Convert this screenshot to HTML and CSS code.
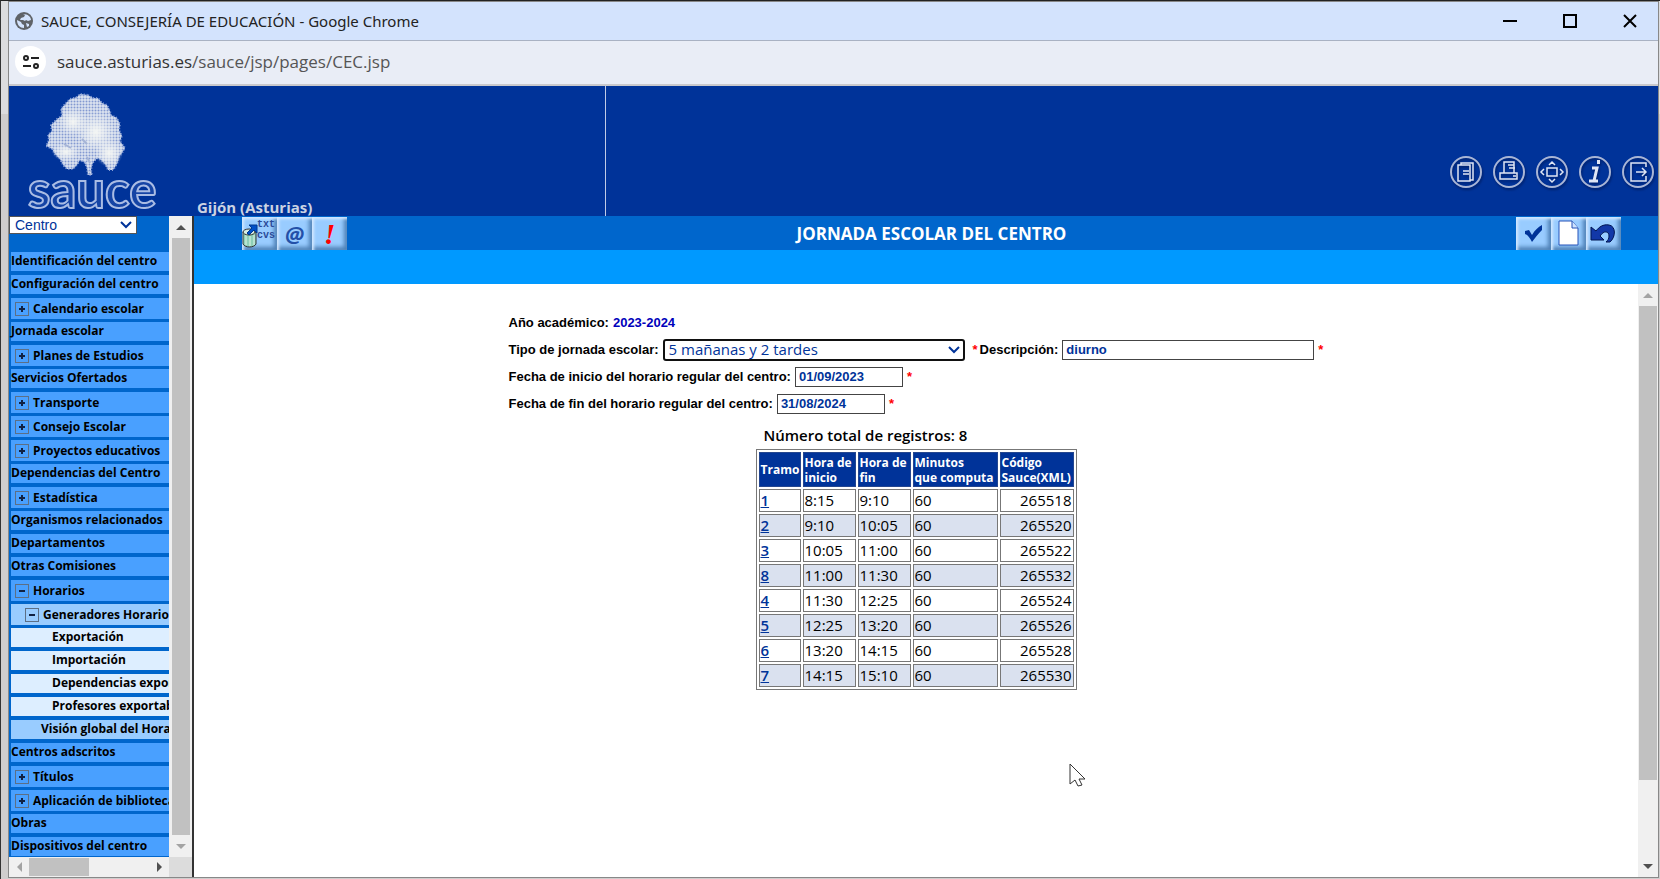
FILE: index.html
```html
<!DOCTYPE html>
<html lang="es">
<head>
<meta charset="utf-8">
<title>SAUCE, CONSEJERÍA DE EDUCACIÓN</title>
<link rel="stylesheet" href="styles.css">
</head>
<body>
<div class="desktop">
<div class="window">

<div class="titlebar">
  <svg class="globe" width="18" height="18" viewBox="0 0 18 18"><circle cx="9" cy="9" r="9" fill="#5f6368"/><path d="M2 8l4 2 1 2 2 1v3c-4 0-7-3-7-8zM8 2l2 1-1 2-3 1-1 2 3 0 2 1 1-1 2 1 3-1c0-3-3-6-8-6zM11 11l3 1 0 2-2 1z" fill="#d3e3fd"/></svg>
  <span class="window-title">SAUCE, CONSEJERÍA DE EDUCACIÓN - Google Chrome</span>
  <div class="window-buttons">
    <button aria-label="Minimizar"><svg width="14" height="14" viewBox="0 0 14 14"><path d="M0 7h14" stroke="#000" stroke-width="2"/></svg></button>
    <button aria-label="Maximizar"><svg width="14" height="14" viewBox="0 0 14 14"><path d="M1 1h12v12H1z" fill="none" stroke="#000" stroke-width="2"/></svg></button>
    <button aria-label="Cerrar"><svg width="14" height="14" viewBox="0 0 14 14"><path d="M1 1l12 12M13 1L1 13" stroke="#000" stroke-width="2"/></svg></button>
  </div>
</div>

<div class="urlbar">
  <button class="site-info" aria-label="Información del sitio">
    <svg width="16" height="16" viewBox="0 0 16 16" fill="none" stroke="#222" stroke-width="2"><circle cx="3" cy="4" r="2"/><path d="M8 4h8M0 12h8"/><circle cx="13" cy="12" r="2"/></svg>
  </button>
  <span class="url">sauce.asturias.es<span class="path">/sauce/jsp/pages/CEC.jsp</span></span>
</div>

<header class="header">
  <div class="brand">
    <svg class="logo" width="150" height="130" viewBox="0 0 150 130">
      <defs>
        <pattern id="dots" width="3" height="3" patternUnits="userSpaceOnUse"><rect width="3" height="3" fill="#b9c6e4"/><rect width="1" height="1" fill="#8399d0"/><rect x="1" y="1" width="2" height="2" fill="#d6deed"/></pattern>
        <radialGradient id="shine"><stop offset="0" stop-color="#f4f6f4" stop-opacity="1"/><stop offset="1" stop-color="#f4f6f4" stop-opacity="0"/></radialGradient>
      </defs>
      <path d="M80 9l5 3 5 0 4 5 5 2 3 6 1 4 6 3 3 6-1 6 3 6-2 5 5 7-3 5-3 4-2 7-4 6-5 0-3-6-4-4-3-2-4 3-2 4-1 5 1 5h-4l-1-7-2-5-5-3-3 5-4 4-6 0-4-4-3-6-5-5-3-5-6-3 3-6-1-5 4-4-1-6 6-6 5-3-1-7 4-5 5-5 7-2 3-3z" fill="url(#dots)" stroke="#8ea4d8" stroke-width="2" stroke-dasharray="1 2"/>
      <ellipse cx="88" cy="46" rx="20" ry="20" fill="url(#shine)"/>
      <ellipse cx="65" cy="36" rx="15" ry="14" fill="url(#shine)"/>
      <ellipse cx="101" cy="67" rx="14" ry="14" fill="url(#shine)"/>
      <ellipse cx="58" cy="66" rx="14" ry="9" fill="url(#shine)"/>
      <path d="M79 71l3 6M56 58l7 4M74 53l5 5" stroke="#a5b4d6" stroke-width="2"/>
      <text class="logo-text" x="20" y="122">sauce</text>
    </svg>
    <span class="place">Gijón (Asturias)</span>
  </div>
  <nav class="tools">
    <a href="#" aria-label="Copiar"><svg width="32" height="32" viewBox="0 0 32 32"><circle cx="16" cy="16" r="15"/><path d="M11 9V7h12v17h-3M8 9h12v16H8zM13 15h6M13 18h6"/></svg></a>
    <a href="#" aria-label="Imprimir"><svg width="32" height="32" viewBox="0 0 32 32"><circle cx="16" cy="16" r="15"/><path d="M11 17V6h10v11M15 9h6M16 12h6M7 17h17v6H7zM20 20h3"/></svg></a>
    <a href="#" aria-label="Mover"><svg width="32" height="32" viewBox="0 0 32 32"><circle cx="16" cy="16" r="15"/><path d="M11 12h10v8H11zM13 9l3-3 3 3M13 23l3 3 3-3M8 13l-3 3 3 3M24 13l3 3-3 3"/></svg></a>
    <a href="#" aria-label="Información"><svg width="32" height="32" viewBox="0 0 32 32"><circle cx="16" cy="16" r="15"/><path d="M13 12h5l-3 13M10 25h9" stroke-width="3"/><path d="M18 6h3" stroke-width="4"/></svg></a>
    <a href="#" aria-label="Salir"><svg width="32" height="32" viewBox="0 0 32 32"><circle cx="16" cy="16" r="15"/><path d="M24 11V7H9v18h15v-5M14 16h10M20 12l4 4-4 4"/></svg></a>
  </nav>
</header>

<div class="page">
  <aside class="sidebar">
    <div class="sidebar-body">
      <div class="menu">
        <div class="picker module">
          <select aria-label="Módulo"><option>Centro</option></select>
          <svg width="12" height="8" viewBox="0 0 12 8"><path d="M1 1l5 5 5-5"/></svg>
        </div>
        <ul>
          <li><a href="#">Identificación del centro</a></li>
          <li><a href="#">Configuración del centro</a></li>
          <li class="node plus"><a href="#">Calendario escolar</a></li>
          <li><a href="#">Jornada escolar</a></li>
          <li class="node plus"><a href="#">Planes de Estudios</a></li>
          <li><a href="#">Servicios Ofertados</a></li>
          <li class="node plus"><a href="#">Transporte</a></li>
          <li class="node plus"><a href="#">Consejo Escolar</a></li>
          <li class="node plus"><a href="#">Proyectos educativos</a></li>
          <li><a href="#">Dependencias del Centro</a></li>
          <li class="node plus"><a href="#">Estadística</a></li>
          <li><a href="#">Organismos relacionados</a></li>
          <li><a href="#">Departamentos</a></li>
          <li><a href="#">Otras Comisiones</a></li>
          <li class="node"><a href="#">Horarios</a></li>
          <li class="node level2"><a href="#">Generadores Horario</a></li>
          <li class="level3"><a href="#">Exportación</a></li>
          <li class="level3"><a href="#">Importación</a></li>
          <li class="level3"><a href="#">Dependencias exportables</a></li>
          <li class="level3"><a href="#">Profesores exportables</a></li>
          <li class="level2"><a href="#">Visión global del Horario</a></li>
          <li><a href="#">Centros adscritos</a></li>
          <li class="node plus"><a href="#">Títulos</a></li>
          <li class="node plus"><a href="#">Aplicación de bibliotecas</a></li>
          <li><a href="#">Obras</a></li>
          <li><a href="#">Dispositivos del centro</a></li>
        </ul>
      </div>
      <div class="scrollbar">
        <span class="arrow up dark"></span><span class="thumb menu-thumb"></span><span class="arrow down"></span>
      </div>
    </div>
    <div class="scrollbar-x">
      <span class="arrow left"></span><span class="thumb"></span><span class="arrow right dark"></span><span class="corner"></span>
    </div>
  </aside>

  <main class="main">
    <div class="toolbar">
      <div class="buttons">
        <button aria-label="Exportar datos">
          <svg width="35" height="33" viewBox="0 0 35 33"><path d="M1 15v12c2 4 11 4 13 0V15z" fill="#8fd0b8" stroke="#333"/><path d="M4 18v10M8 19v10M12 18v10" stroke="#dff5e8" stroke-width="1"/><ellipse cx="7" cy="15" rx="6" ry="3" fill="#d8efe4" stroke="#333"/><path d="M5 16l5-5-3-3h8v8l-3-3-5 5z" fill="#0050c8" stroke="#003a90"/><text x="15" y="10">txt</text><text x="15" y="21">cvs</text></svg>
        </button>
        <button class="at" aria-label="Correo">@</button>
        <button class="bang" aria-label="Avisos">!</button>
      </div>
      <h1>JORNADA ESCOLAR DEL CENTRO</h1>
      <div class="buttons right">
        <button aria-label="Aceptar"><svg width="35" height="33" viewBox="0 0 35 33"><path d="M9 14l4-1 3 5c3-5 6-8 10-10v5c-4 4-7 8-10 12-2-4-4-7-7-8z" fill="#039"/></svg></button>
        <button aria-label="Nuevo"><svg width="35" height="33" viewBox="0 0 35 33"><path d="M8 4h13l6 7v17H8z" fill="#fff" stroke="#2452b8" /><path d="M21 4v7h6" fill="#cfe3ff" stroke="#2452b8"/></svg></button>
        <button aria-label="Volver"><svg width="35" height="33" viewBox="0 0 35 33"><path d="M5 10v13h13l-4-4c4-6 9-5 9 0 0 3-1 4-3 6h4c6-5 6-16-1-17-6-1-10 2-13 6z" fill="#1238a8" stroke="#001450"/></svg></button>
      </div>
    </div>
    <div class="subbar"></div>

    <div class="content">
      <div class="content-body">
        <form class="form">
          <div class="row"><span class="label">Año académico:</span><span class="year">2023-2024</span></div>
          <div class="row">
            <label for="tipo">Tipo de jornada escolar:</label>
            <div class="picker type">
              <select id="tipo"><option>5 mañanas y 2 tardes</option></select>
              <svg width="12" height="8" viewBox="0 0 12 8"><path d="M1 1l5 5 5-5"/></svg>
            </div>
            <span class="req wide">*</span>
            <label for="desc">Descripción:</label>
            <input class="long" id="desc" type="text" value="diurno">
            <span class="req">*</span>
          </div>
          <div class="row">
            <label for="inicio">Fecha de inicio del horario regular del centro:</label>
            <input id="inicio" type="text" value="01/09/2023">
            <span class="req">*</span>
          </div>
          <div class="row">
            <label for="fin">Fecha de fin del horario regular del centro:</label>
            <input id="fin" type="text" value="31/08/2024">
            <span class="req">*</span>
          </div>
        </form>

        <div class="records">
          <p class="total">Número total de registros: 8</p>
          <table>
            <colgroup><col class="c1"><col class="c2"><col class="c2"><col class="c3"><col class="c4"></colgroup>
            <thead>
              <tr><th>Tramo</th><th>Hora de inicio</th><th>Hora de fin</th><th>Minutos<br>que computa</th><th>Código Sauce(XML)</th></tr>
            </thead>
            <tbody>
              <tr><td><a href="#">1</a></td><td>8:15</td><td>9:10</td><td>60</td><td>265518</td></tr>
              <tr><td><a href="#">2</a></td><td>9:10</td><td>10:05</td><td>60</td><td>265520</td></tr>
              <tr><td><a href="#">3</a></td><td>10:05</td><td>11:00</td><td>60</td><td>265522</td></tr>
              <tr><td><a href="#">8</a></td><td>11:00</td><td>11:30</td><td>60</td><td>265532</td></tr>
              <tr><td><a href="#">4</a></td><td>11:30</td><td>12:25</td><td>60</td><td>265524</td></tr>
              <tr><td><a href="#">5</a></td><td>12:25</td><td>13:20</td><td>60</td><td>265526</td></tr>
              <tr><td><a href="#">6</a></td><td>13:20</td><td>14:15</td><td>60</td><td>265528</td></tr>
              <tr><td><a href="#">7</a></td><td>14:15</td><td>15:10</td><td>60</td><td>265530</td></tr>
            </tbody>
          </table>
        </div>
      </div>
      <div class="scrollbar">
        <span class="arrow up"></span><span class="thumb main-thumb"></span><span class="arrow down dark"></span>
      </div>
    </div>
  </main>
</div>

</div>
<svg class="cursor" width="18" height="26" viewBox="0 0 18 26"><path d="M1 1v20l5-4 3 6 4-1-3-6h6z" fill="#fff" stroke="#333"/></svg>
</div>
</body>
</html>
```
FILE: styles.css
```css
* { box-sizing: border-box; }
body { margin: 0; font-family: "Open Sans", "Noto Sans", sans-serif; }
button { padding: 0; border: 0; background: none; }
a { color: inherit; }

.desktop {
  position: relative;
  height: 100vh;
  padding: 1px 2px 2px 8px;
  background: linear-gradient(#dcdcde 113px, #cfcdcd 113px);
  border-left: 1px solid #333;
  border-top: 1px solid #222;
}
.window {
  display: flex;
  flex-direction: column;
  height: 100%;
  background: #fff;
  outline: 1px solid #888;
}

/* browser frame */
.titlebar {
  display: flex;
  align-items: center;
  flex: none;
  height: 39px;
  padding: 0 21px 0 6px;
  background: #d3e3fd;
  border-bottom: 1px solid #a9b2c3;
}
.window-title { margin-left: 8px; font-family: "Noto Sans", sans-serif; font-size: 15px; color: #222; }
.window-buttons { display: flex; gap: 46px; margin-left: auto; }
.window-buttons button { width: 14px; height: 14px; }
.window-buttons svg { display: block; }
.urlbar {
  display: flex;
  align-items: center;
  flex: none;
  height: 45px;
  padding: 0 6px 2px;
  background: #e9edf6;
  border-bottom: 2px solid #c9c9cc;
}
.site-info {
  display: flex;
  align-items: center;
  justify-content: center;
  width: 31px;
  height: 31px;
  border-radius: 50%;
  background: #fff;
}
.url { margin-left: 11px; font-size: 17px; color: #333; }
.path { color: #555; }

/* application header */
.header {
  display: flex;
  flex: none;
  height: 130px;
  background: #039;
}
.brand {
  display: flex;
  align-items: flex-end;
  width: 597px;
  border-right: 1px solid #c0cbe6;
}
.logo { flex: none; margin-left: -1px; }
.logo-text {
  font: bold 51px Lato, sans-serif;
  fill: #1544a5;
  stroke: #a9bce4;
  stroke-width: 2px;
}
.place { margin-left: 39px; font-size: 15px; font-weight: 700; line-height: 18px; color: #ccd3e3; }
.tools {
  display: flex;
  align-items: flex-end;
  gap: 11px;
  margin-left: auto;
  padding: 0 4px 28px 0;
}
.tools svg { display: block; fill: none; stroke: #dfe6f5; stroke-width: 1.5; filter: drop-shadow(1px 2px 1px #00206a); }
.tools circle { stroke: #a9b6d6; stroke-width: 2; }

.page { display: flex; flex: 1; min-height: 0; }

/* left menu */
.sidebar {
  display: flex;
  flex-direction: column;
  flex: none;
  width: 185px;
  border-right: 2px solid #333;
  background: #06c;
}
.sidebar-body { display: flex; flex: 1; min-height: 0; }
.sidebar-body .scrollbar { width: 23px; padding: 0 1px 0 2px; }
.menu { flex: 1; min-width: 0; overflow: hidden; }
.menu ul { margin: 18px 0 0; padding: 0 0 0 2px; list-style: none; }
.menu li {
  height: 19px;
  margin-bottom: 4px;
  background: #49a0ff;
  font-size: 12px;
  font-weight: 700;
  line-height: 17px;
  white-space: nowrap;
  color: #000;
}
.menu a { text-decoration: none; }
.menu li.node { display: flex; align-items: center; height: 21px; margin-bottom: 3px; padding-left: 4px; line-height: 19px; }
.menu li.node::before {
  content: "";
  flex: none;
  width: 12px;
  height: 12px;
  margin-right: 4px;
  border: 1px solid #5c6f86;
  background: linear-gradient(#124, #124) center / 6px 2px no-repeat;
}
.menu li.plus::before {
  background:
    linear-gradient(#124, #124) center / 6px 2px no-repeat,
    linear-gradient(#124, #124) center / 2px 6px no-repeat;
}
.menu li.level2 { padding-left: 30px; background: #9cf; }
.menu li.node.level2 { padding-left: 14px; }
.menu li.level3 { padding-left: 41px; background: #def; }

/* drop-downs */
.picker { position: relative; }
.picker select {
  display: block;
  appearance: none;
  width: 100%;
  height: 100%;
  border: 1px solid #555;
  background: #fff;
  color: #039;
}
.picker svg {
  position: absolute;
  right: 5px;
  top: 50%;
  margin-top: -4px;
  fill: none;
  stroke: #039;
  stroke-width: 2;
  pointer-events: none;
}
.module { width: 128px; height: 18px; }
.module select { padding: 0 5px; font: 14px "Liberation Sans", Arial, sans-serif; }
.type { width: 302px; height: 22px; }
.type select {
  padding: 0 6px 2px;
  border: 0;
  border-radius: 3px;
  box-shadow: inset 0 0 0 2px #111;
  font: 15px "Open Sans", sans-serif;
}

/* scroll bars */
.scrollbar { display: flex; flex-direction: column; flex: none; width: 20px; background: #f0f0f0; }
.scrollbar .thumb { margin: 0 1px; background: #c1c1c1; }
.menu-thumb { flex: 1; }
.main-thumb { height: 80%; }
.arrow { display: flex; align-items: center; justify-content: center; flex: none; width: 20px; height: 22px; }
.arrow::before { content: ""; border: 5px solid transparent; }
.up::before { border-top: 0; border-bottom-color: #a3a3a3; }
.down::before { border-bottom: 0; border-top-color: #a3a3a3; }
.left::before { border-left: 0; border-right-color: #a3a3a3; }
.right::before { border-right: 0; border-left-color: #505050; }
.up.dark::before { border-bottom-color: #505050; }
.down.dark::before { border-top-color: #505050; }
.scrollbar .down { margin-top: auto; }
.scrollbar-x { display: flex; align-items: center; flex: none; height: 20px; background: #f0f0f0; }
.scrollbar-x .thumb { width: 60px; height: 18px; background: #c1c1c1; }
.scrollbar-x .right { margin-left: auto; }
.corner { width: 23px; height: 20px; background: #dcdcdc; }

/* title row */
.main { display: flex; flex-direction: column; flex: 1; min-width: 0; }
.toolbar {
  display: grid;
  grid-template-columns: 1fr auto 1fr;
  align-items: center;
  flex: none;
  height: 34px;
  padding: 0 37px 0 48px;
  background: #06c;
}
.toolbar h1 { margin: 0; font-size: 17px; font-weight: 700; color: #fff; }
.buttons { display: flex; }
.buttons.right { justify-content: flex-end; }
.buttons button {
  width: 35px;
  height: 33px;
  background: #9cf;
  box-shadow: inset 2px 2px 3px #d5e9ff, inset -3px -3px 4px #4d7fb5;
}
.buttons svg { display: block; }
.buttons text { font: bold 10px "Liberation Mono", monospace; fill: #2a4a98; }
.buttons .at { font: bold italic 22px "Open Sans", sans-serif; color: #2350a8; }
.buttons .bang { font: italic bold 30px "Liberation Serif", serif; color: #f00; }
.subbar { flex: none; height: 34px; background: #09f; }

/* form */
.content { display: flex; flex: 1; min-height: 0; }
.content-body { display: flex; flex-direction: column; align-items: center; flex: 1; padding-top: 25px; }
.form { width: 815px; font: bold 13px "Liberation Sans", Arial, sans-serif; color: #000; }
.row { display: flex; align-items: center; gap: 4px; height: 27px; }
.year { color: #00b; }
.row input {
  width: 108px;
  height: 20px;
  padding: 0 3px;
  border: 1px solid #444;
  font: inherit;
  color: #039;
}
.row input.long { width: 252px; }
.req { color: #f00; }
.req.wide { margin-left: 4px; margin-right: -2px; }

/* records table */
.records { width: 321px; margin-top: 8px; }
.total { margin: 0 0 4px; padding-left: 8px; font-size: 15px; font-weight: 600; line-height: 20px; }
.records table {
  width: 100%;
  table-layout: fixed;
  border: 1px solid #777;
  border-spacing: 2px;
}
.c1 { width: 42px; }
.c2 { width: 53px; }
.c3 { width: 85px; }
.records th {
  height: 35px;
  padding: 1px;
  border: 1px solid #24468f;
  background: #039;
  font-size: 12px;
  font-weight: 700;
  line-height: 15px;
  text-align: left;
  color: #fff;
}
.records td {
  height: 23px;
  padding: 0 1px;
  border: 1px solid #777;
  font-size: 15px;
  line-height: 21px;
}
.records td:last-child { text-align: right; }
.records tbody tr:nth-child(even) td { background: #dae1ef; }
.records td a { font-weight: 600; color: #039; }

.cursor { position: absolute; left: 1068px; top: 762px; }
```
